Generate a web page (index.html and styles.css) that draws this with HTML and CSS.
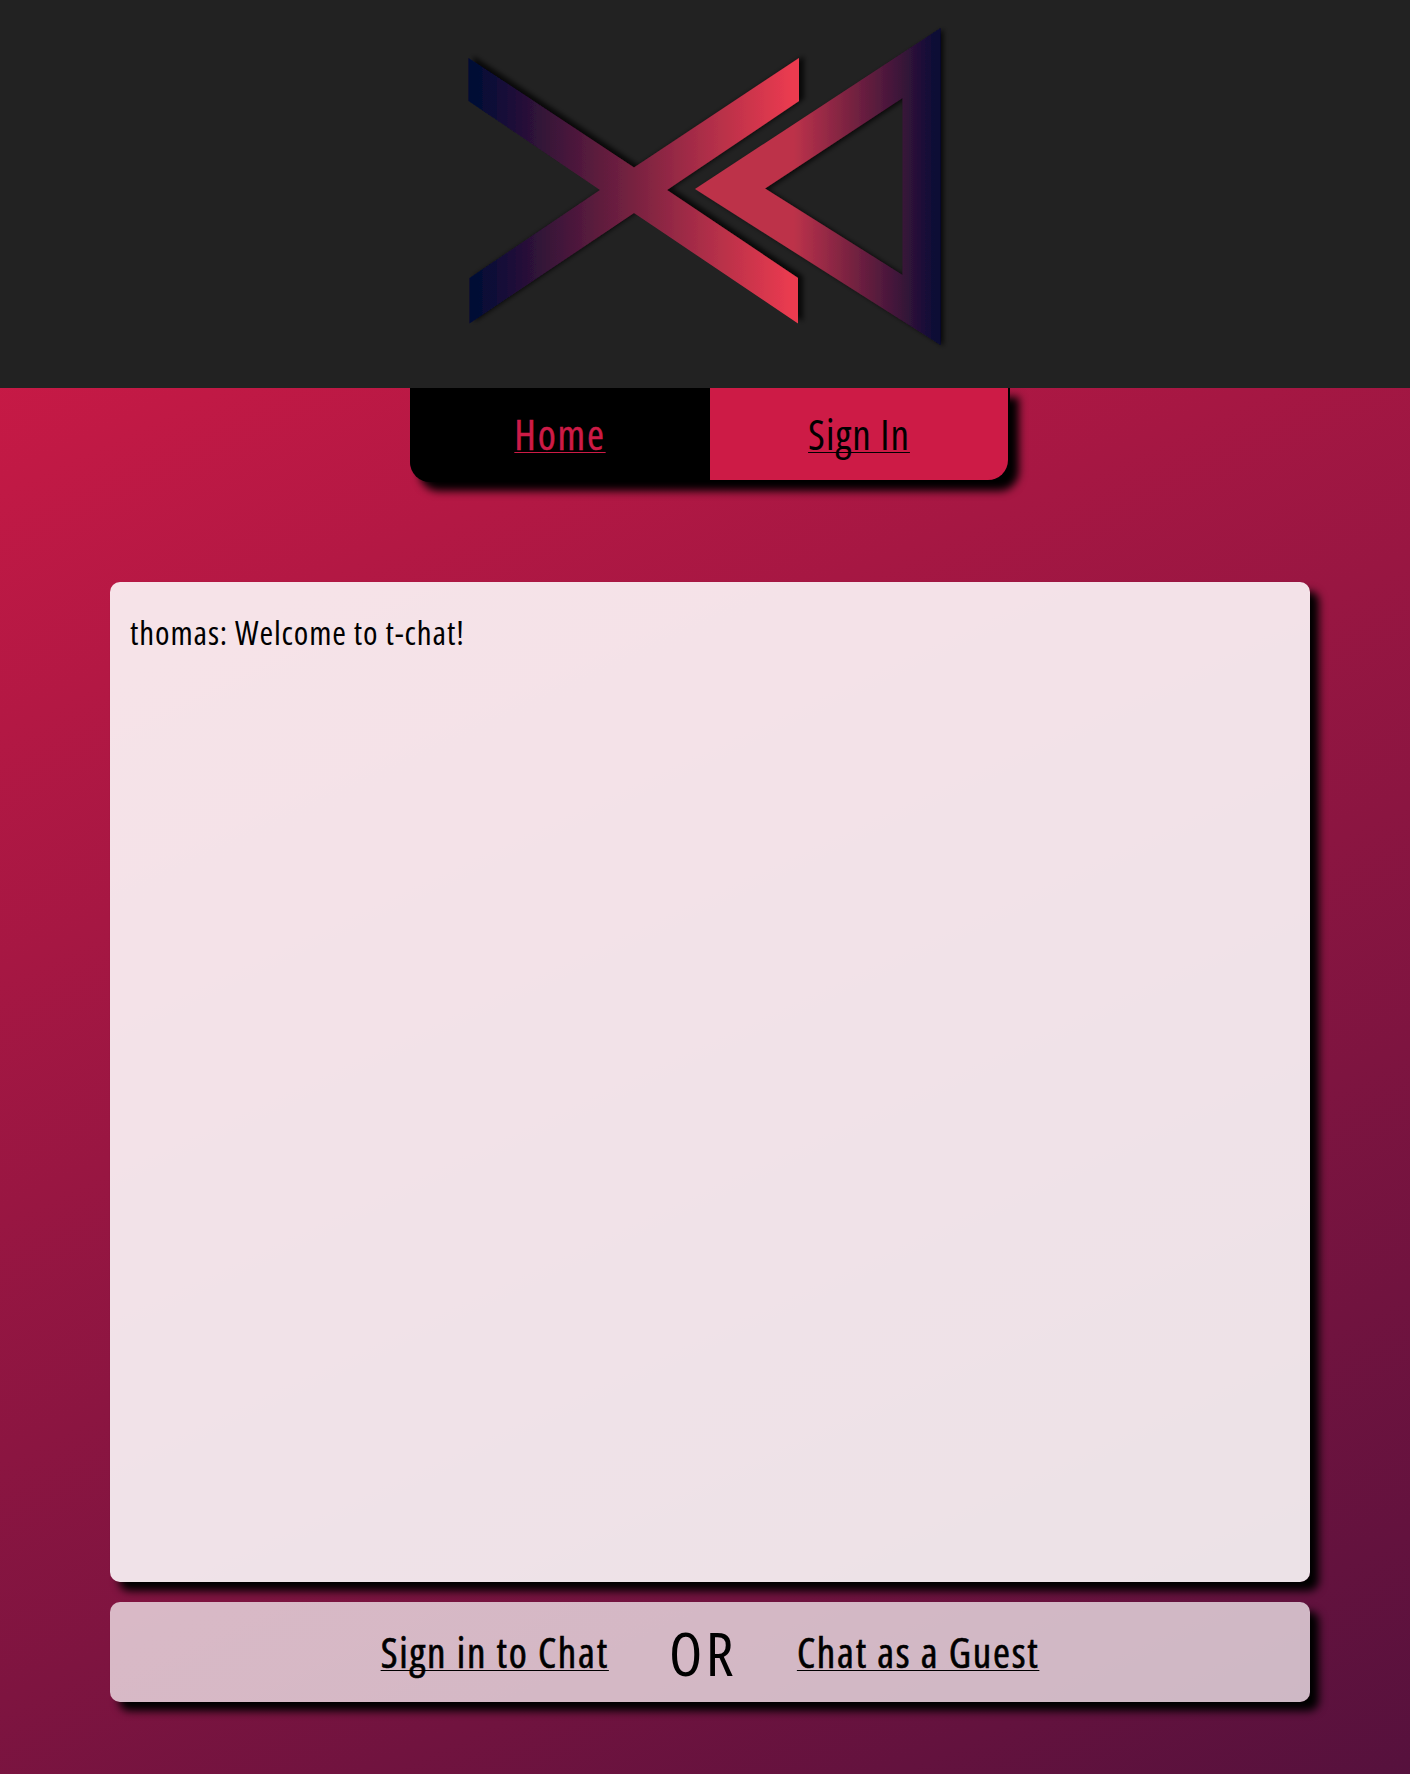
FILE: index.html
```html
<!DOCTYPE html>
<html lang="en">
<head>
<meta charset="utf-8">
<title>t-chat</title>
<link rel="stylesheet" href="styles.css">
</head>
<body>
<header class="header">
  <svg class="logo" width="500" height="340" viewBox="460 20 500 340" aria-hidden="true">
    <defs>
      <linearGradient id="cross" gradientUnits="userSpaceOnUse" x1="468" y1="0" x2="799" y2="0">
        <stop offset="0.03" stop-color="#030a36"/>
        <stop offset="0.25" stop-color="#3a1439"/>
        <stop offset="0.7" stop-color="#a92d47"/>
        <stop offset="0.98" stop-color="#eb3b50"/>
      </linearGradient>
      <linearGradient id="triangle" gradientUnits="userSpaceOnUse" x1="695" y1="0" x2="941" y2="0">
        <stop offset="0.4" stop-color="#bd324a"/>
        <stop offset="0.84" stop-color="#3a1439"/>
        <stop offset="0.98" stop-color="#0b0c36"/>
      </linearGradient>
      <filter id="shade" x="-10%" y="-10%" width="120%" height="120%">
        <feDropShadow dx="5" dy="-2" stdDeviation="2.5" flood-color="#000" flood-opacity="0.75"/>
      </filter>
      <filter id="shade-soft" x="-10%" y="-10%" width="120%" height="120%">
        <feDropShadow dx="3" dy="1" stdDeviation="2.5" flood-color="#000" flood-opacity="0.75"/>
      </filter>
    </defs>
    <path filter="url(#shade)" fill="url(#cross)" d="M469.500 278L634 167.500L799 58V101L667 190L798 278V323.500L634 213L469.500 323.500V278L600 190L468.500 101V58L634 167.500Z"/>
    <path filter="url(#shade-soft)" fill="url(#triangle)" fill-rule="evenodd" d="M940.500 28V345L695 189ZM902.500 98L765 188.500L902.500 275Z"/>
  </svg>
</header>
<nav class="nav">
  <a class="tab tab-active" href="#">Home</a>
  <a class="tab" href="#">Sign In</a>
</nav>
<main class="chat">
  <section class="messages"><p class="message">thomas: Welcome to t-chat!</p></section>
  <section class="actions">
    <a class="action" href="#">Sign in to Chat</a>
    <span class="or">OR</span>
    <a class="action" href="#">Chat as a Guest</a>
  </section>
</main>
</body>
</html>
```
FILE: styles.css
```css
* { box-sizing: border-box; }
body {
  margin: 0;
  min-height: 1774px;
  background: linear-gradient(155deg, #db1b47 0%, #56113d 100%);
  color: #000;
  font-family: "Open Sans", sans-serif;
  font-stretch: 75%;
}
a { color: inherit; text-underline-offset: 2px; text-decoration-thickness: 1px; text-decoration-skip-ink: none; }
.header { height: 388px; background: #222; display: flex; justify-content: center; padding-top: 20px; padding-left: 10px; }
.logo { display: block; }
.nav { display: flex; width: 600px; height: 94px; margin-left: 410px; background: #000; border-radius: 0 0 20px 20px; box-shadow: 9px 9px 9px #000; padding-right: 2px; clip-path: inset(0 -30px -30px 0); }
.tab { flex: 1; display: flex; align-items: center; justify-content: center; height: 92px; background: #cd1b46; font-size: 41px; letter-spacing: 1px; border-radius: 0 0 20px 0; }
.tab-active { flex: 0 0 300px; letter-spacing: 1.75px; background: #000; color: #cd1b46; border-radius: 0 0 0 20px; -webkit-text-stroke: 0.4px; }
.chat { width: 1200px; margin: 100px 0 0 110px; }
.messages { height: 1000px; border-radius: 10px; background: rgba(255,255,255,.88); box-shadow: 9px 9px 9px #000; padding: 29px 20px; }
.message { margin: 0; font-size: 33px; line-height: 44px; letter-spacing: 0.87px; white-space: nowrap; }
.actions { height: 100px; margin-top: 20px; border-radius: 10px; background: rgba(255,255,255,.7); box-shadow: 9px 9px 9px #000; display: flex; align-items: center; justify-content: center; gap: 60px; white-space: nowrap; }
.action { font-size: 41px; letter-spacing: 1.77px; -webkit-text-stroke: 0.6px; }
.or { font-size: 61px; letter-spacing: 3.5px; }
```
